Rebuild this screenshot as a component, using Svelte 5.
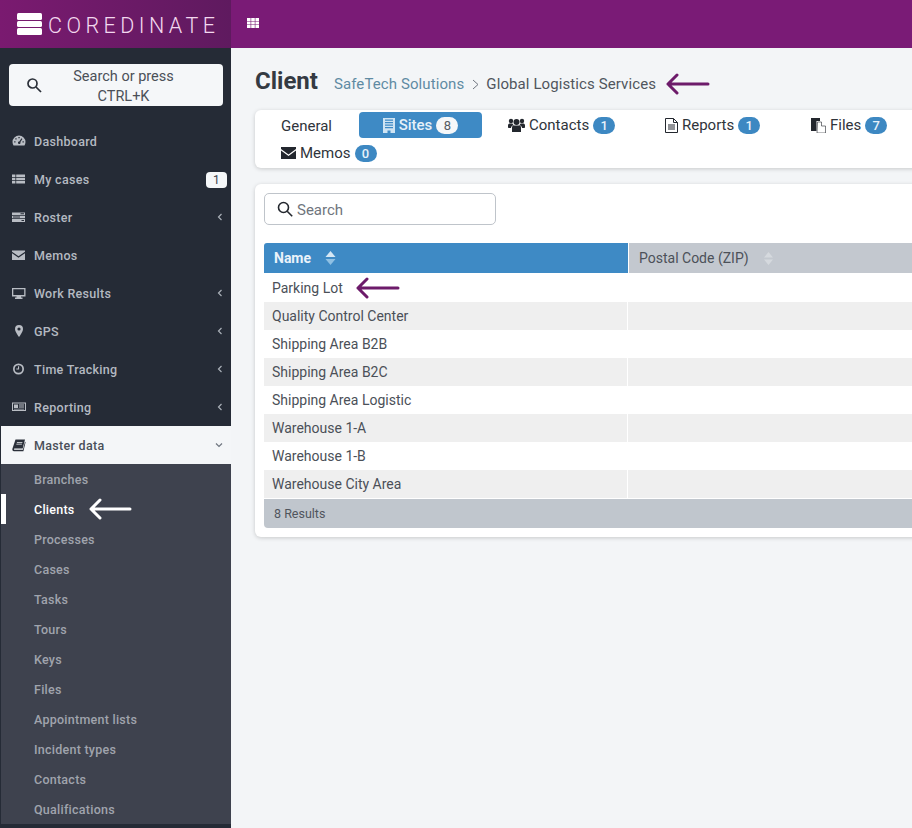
<script>
  const menu = [
    { label: 'Dashboard', icon: 'dash' },
    { label: 'My cases', icon: 'table', badge: '1' },
    { label: 'Roster', icon: 'roster', arrow: true },
    { label: 'Memos', icon: 'mail' },
    { label: 'Work Results', icon: 'monitor', arrow: true },
    { label: 'GPS', icon: 'pin', arrow: true },
    { label: 'Time Tracking', icon: 'clock', arrow: true },
    { label: 'Reporting', icon: 'news', arrow: true }
  ];
  const subItems = ['Branches', 'Clients', 'Processes', 'Cases', 'Tasks', 'Tours', 'Keys', 'Files', 'Appointment lists', 'Incident types', 'Contacts', 'Qualifications'];
  const sites = ['Parking Lot', 'Quality Control Center', 'Shipping Area B2B', 'Shipping Area B2C', 'Shipping Area Logistic', 'Warehouse 1-A', 'Warehouse 1-B', 'Warehouse City Area'];
</script>

{#snippet arrow(color, width)}
  <svg class="arrow" width={width} height="22" viewBox="0 0 {width} 22" fill="none" stroke={color} stroke-width="3" stroke-linecap="round" stroke-linejoin="round">
    <path d="M11 2 L2 11 L11 20 M2 11 H{width - 2}" />
  </svg>
{/snippet}

{#snippet menuIcon(name)}
  <svg class="micon" width="14" height="14" viewBox="0 0 14 14" fill="currentColor">
    {#if name === 'dash'}
      <path fill-rule="evenodd" d="M7 1.500a6.500 6.500 0 0 0-6.500 6.500c0 1.300.4 2.500 1 3.500h11c.6-1 1-2.200 1-3.500A6.500 6.500 0 0 0 7 1.500zM2.200 7.200h1.300v1.300H2.200zM3.300 4.300h1.300v1.300H3.300zM6.400 3h1.300v1.300H6.400zM10.500 7.200h1.300v1.300h-1.300zM9.500 4.300l.9.800-2 3a1.300 1.300 0 1 1-1.100-.7z" />
    {:else if name === 'table'}
      <path d="M0 2.500h3.400v2.500H0zM4.200 2.500h8.800v2.500H4.200zM0 5.800h3.400v2.500H0zM4.200 5.800h8.800v2.500H4.200zM0 9.100h3.400v2.500H0zM4.200 9.100h8.800v2.500H4.200z" />
    {:else if name === 'roster'}
      <path fill-rule="evenodd" d="M0 2.500h13v2.500H0zM0 5.800h13v2.500H0zM0 9.100h13v2.800H0zM8.500 3.300h3.500v.9H8.500zM1 6.600h7v.9H1zM9.500 10h2.500v1H9.500z" />
    {:else if name === 'mail'}
      <path d="M0 2.500h13v1.200L6.500 8.200 0 3.700zM0 5.200l6.500 4.500L13 5.200v6.800H0z" />
    {:else if name === 'monitor'}
      <path fill-rule="evenodd" d="M0 2h13.500v8.500H9v1.100h1.500V13h-7.500v-1.400h1.500v-1.100H0zM1.300 3.300v5.800h10.900V3.300z" />
    {:else if name === 'pin'}
      <path d="M7 1a4 4 0 0 0-4 4c0 2.800 4 8 4 8s4-5.200 4-8a4 4 0 0 0-4-4zm0 5.600A1.600 1.600 0 1 1 7 3.400a1.600 1.600 0 0 1 0 3.200z" />
    {:else if name === 'clock'}
      <path fill-rule="evenodd" d="M6.500 1.500a5.500 5.500 0 1 0 0 11 5.500 5.500 0 0 0 0-11zm0 1.700a3.800 3.800 0 1 1 0 7.600 3.800 3.800 0 0 1 0-7.600zM6 4.300h1.100v3.300H4.300V6.500H6z" />
    {:else if name === 'news'}
      <path fill-rule="evenodd" d="M0 2.500h14v8.500H0zM1 3.500v6.500h12V3.500zM2 4.500h4v3.500H2zM7 4.500h5v1H7zM7 6.500h5v1H7zM2 8.700h10v.7H2z" />
    {:else if name === 'book'}
      <path fill-rule="evenodd" d="M3.500 1.500h9.500l-2.300 9H2.500c-.7 0-.8 1.300 0 1.300h8.400l2.100-8 .6.500-2.200 9H2c-1.300 0-1.900-1.200-1.600-2.500zM5 4h5.500l-.2.800H4.800zM4.500 5.800H10l-.2.800H4.300z" />
    {/if}
  </svg>
{/snippet}

<div class="page">
  <aside class="sidebar">
    <div class="brand">
      <div class="logo"><span></span><span></span><span></span></div>
      <span class="brand-name">COREDINATE</span>
    </div>
    <div class="side-search">
      <svg width="16" height="16" viewBox="0 0 16 16" fill="none" stroke="#2a2f38" stroke-width="1.7"><circle cx="6.500" cy="6.500" r="4.500" /><path d="M10 10l5 5" /></svg>
      <span>Search or press CTRL+K</span>
    </div>
    <nav class="menu">
      {#each menu as item}
        <div class="menu-item">
          {@render menuIcon(item.icon)}
          <span class="menu-label">{item.label}</span>
          {#if item.badge}<span class="menu-badge">{item.badge}</span>{/if}
          {#if item.arrow}
            <svg class="chev" width="6" height="8" viewBox="0 0 6 8" fill="none" stroke="currentColor" stroke-width="1.200"><path d="M4.500 1L1.500 4l3 3" /></svg>
          {/if}
        </div>
      {/each}
      <div class="menu-item open">
        {@render menuIcon('book')}
        <span class="menu-label">Master data</span>
        <svg class="chev" width="8" height="6" viewBox="0 0 8 6" fill="none" stroke="currentColor" stroke-width="1.200"><path d="M1 1.500l3 3 3-3" /></svg>
      </div>
      <div class="submenu">
        {#each subItems as sub}
          <div class="sub-item" class:active={sub === 'Clients'}>
            {sub}
            {#if sub === 'Clients'}
              <span class="sub-arrow">{@render arrow('#fff', 43)}</span>
            {/if}
          </div>
        {/each}
      </div>
    </nav>
  </aside>

  <div class="main">
    <header class="topbar">
      <svg width="14" height="12" viewBox="0 0 14 12" fill="#fff"><path d="M1 1h3.600v3H1zM5.200 1h3.600v3H5.200zM9.400 1H13v3H9.400zM1 4.500h3.600v3H1zM5.200 4.500h3.600v3H5.200zM9.400 4.500H13v3H9.400zM1 8h3.600v3H1zM5.200 8h3.600v3H5.200zM9.400 8H13v3H9.400z" /></svg>
    </header>

    <div class="content">
      <div class="title-row">
        <h1>Client</h1>
        <span class="crumb-link">SafeTech Solutions</span>
        <svg class="crumb-sep" width="7" height="11" viewBox="0 0 7 11" fill="none" stroke="#6f7680" stroke-width="1"><path d="M1 1l5 4.500-5 4.500" /></svg>
        <span class="crumb">Global Logistics Services</span>
        <span class="title-arrow">{@render arrow('#6d1b6a', 44)}</span>
      </div>

      <div class="tabs card">
        <div class="tab general">General</div>
        <div class="tab sites">
          <svg width="12" height="15" viewBox="0 0 12 15" fill="#cfe4f3"><path fill-rule="evenodd" d="M0 0h12v15H7.500v-2.500h-3V15H0zM2 1.500v1.200h8V1.500zM2 4v1.200h8V4zM2 6.500v1.200h8V6.500zM2 9v1.200h8V9z" /></svg>
          Sites <span class="pill light">8</span>
        </div>
        <div class="tab contacts">
          <svg width="17" height="14" viewBox="0 0 17 14" fill="#23272e"><circle cx="8.500" cy="4" r="3" /><circle cx="3" cy="3" r="2.200" /><circle cx="14" cy="3" r="2.200" /><path d="M4 14V9.500C4 8 5 7.500 6 7.500h5c1 0 2 .5 2 2V14zM0 9V7.500C0 6 1 5.500 2 5.500h2.500c.5 1 .8 1.300 1.200 1.700C4 7.500 3 8.500 3 10H1C.4 10 0 9.600 0 9zM17 9V7.500C17 6 16 5.500 15 5.500h-2.500c-.5 1-.8 1.300-1.200 1.700 1.700.3 2.700 1.300 2.700 2.800h2c.6 0 1-.4 1-1z" /></svg>
          Contacts <span class="pill">1</span>
        </div>
        <div class="tab reports">
          <svg width="13" height="15" viewBox="0 0 13 15" fill="none" stroke="#23272e" stroke-width="1"><path d="M.5.500h8l4 4v10H.5zM8.500.500v4h4M3 7h7M3 9h7M3 11h7" /></svg>
          Reports <span class="pill">1</span>
        </div>
        <div class="tab files">
          <svg width="15" height="15" viewBox="0 0 15 15" fill="#23272e"><path d="M0 0h9v3H5.500v10H0z" /><path d="M6.500 4h4v4h4v7h-8.500z" stroke="#23272e" stroke-width=".6" fill="#fff" /></svg>
          Files <span class="pill">7</span>
        </div>
        <div class="tab memos">
          <svg width="15" height="12" viewBox="0 0 15 12" fill="#23272e"><path d="M0 0h15v2L7.500 7.500 0 2zM0 3.500l7.500 5.500L15 3.500V12H0z" /></svg>
          Memos <span class="pill">0</span>
        </div>
      </div>

      <div class="panel card">
        <div class="search">
          <svg width="16" height="16" viewBox="0 0 16 16" fill="none" stroke="#23272e" stroke-width="1.600"><circle cx="6.500" cy="6.500" r="5" /><path d="M10.200 10.200l5 5" /></svg>
          <span>Search</span>
        </div>

        <div class="table">
          <div class="thead">
            <div class="th name">
              Name
              <svg width="11" height="14" viewBox="0 0 11 14"><path d="M5.500 0l5 6H.5z" fill="#d5e7f4" /><path d="M5.500 14l-5-6h10z" fill="#8fc0e3" /></svg>
            </div>
            <div class="th zip">
              Postal Code (ZIP)
              <svg width="9" height="13" viewBox="0 0 9 13" fill="#d5d9de"><path d="M4.500 0l4.500 5.500H0zM4.500 13L0 7.500h9z" /></svg>
            </div>
          </div>
          {#each sites as site, i}
            <div class="row" class:odd={i % 2 === 1} class:top={i === 0}>
              <div class="td name">
                {site}
                {#if i === 0}<span class="row-arrow">{@render arrow('#6d1b6a', 44)}</span>{/if}
              </div>
              <div class="td zip"></div>
            </div>
          {/each}
          <div class="tfoot">8 Results</div>
        </div>
      </div>
    </div>
  </div>
</div>

<style>
  :global(body) {
    margin: 0;
    background: #f3f5f7;
    font-family: Roboto, "Liberation Sans", sans-serif;
    overflow: hidden;
  }

  .page {
    display: flex;
    width: 912px;
    height: 828px;
    overflow: hidden;
  }

  .sidebar {
    width: 231px;
    flex-shrink: 0;
    box-sizing: border-box;
    padding-left: 1px;
    background: #252b36;
    overflow: hidden;
  }

  .brand {
    height: 48px;
    margin-left: -1px;
    display: flex;
    align-items: center;
    padding-left: 17px;
    gap: 6px;
    background: linear-gradient(90deg, #7a1a70, #5f1a5f);
  }

  .logo {
    display: flex;
    flex-direction: column;
    gap: 1px;
    width: 25px;
  }

  .logo span {
    height: 6.500px;
    background: #fff;
    border-radius: 1.500px;
  }

  .brand-name {
    color: #f3d8ef;
    font-size: 21.500px;
    font-weight: 300;
    letter-spacing: 4.450px;
    padding-top: 2px;
  }

  .side-search {
    margin: 16px 8px 0 8px;
    height: 42px;
    box-sizing: border-box;
    background: #f5f7f9;
    border-radius: 4px;
    display: flex;
    align-items: center;
    padding: 0 14px 0 17px;
    color: #4b5058;
    font-size: 14.500px;
    line-height: 20px;
    text-align: center;
  }

  .side-search span {
    flex: 1;
    padding: 4px 18px 0 14px;
  }

  .menu {
    margin-top: 16px;
  }

  .menu-item {
    height: 38px;
    display: flex;
    align-items: center;
    padding: 0 8px 0 11px;
    color: #b4b9c1;
    font-size: 12.500px;
    font-weight: 500;
    letter-spacing: 0.300px;
    position: relative;
  }

  .micon {
    margin-right: 8px;
    flex-shrink: 0;
    color: #b9bdc4;
  }

  .menu-label {
    flex: 1;
  }

  .menu-badge {
    position: absolute;
    right: 4px;
    top: 12px;
    width: 21px;
    height: 16px;
    background: #f5f7f9;
    color: #3c424c;
    border-radius: 4px;
    font-size: 12px;
    text-align: center;
    line-height: 16px;
    font-weight: 400;
  }

  .chev {
    color: #aab0b8;
  }

  .menu-item.open {
    background: #f4f6f8;
    color: #4a4f58;
  }

  .menu-item.open .micon {
    color: #2b303a;
  }

  .menu-item.open .chev {
    color: #6f7680;
  }

  .submenu {
    background: #3e424e;
    height: 360px;
  }

  .sub-item {
    height: 30px;
    display: flex;
    align-items: center;
    padding-left: 33px;
    color: #a0a4ad;
    font-size: 12.500px;
    font-weight: 500;
    letter-spacing: 0.250px;
  }

  .sub-item.active {
    color: #fff;
    padding-left: 28px;
    border-left: 5px solid #fff;
  }

  .sub-arrow {
    margin-left: 14px;
    display: flex;
  }

  .arrow {
    display: block;
  }

  .main {
    flex: 1;
    min-width: 0;
  }

  .topbar {
    height: 48px;
    background: #7a1b76;
    display: flex;
    align-items: center;
    padding-left: 15px;
    padding-bottom: 3px;
    box-sizing: border-box;
  }

  .content {
    padding-left: 24px;
    width: 760px;
  }

  .title-row {
    display: flex;
    align-items: center;
    height: 62px;
    box-sizing: border-box;
    padding-top: 10px;
    color: #50555d;
    font-size: 15px;
    letter-spacing: 0.100px;
  }

  h1 {
    margin: 0 16px 0 0;
    font-size: 24px;
    font-weight: 700;
    color: #343a42;
    letter-spacing: 0;
    position: relative;
    top: -3px;
  }

  .crumb-link {
    color: #5f8ba3;
  }

  .crumb-sep {
    margin: 0 7px 0 8px;
  }

  .title-arrow {
    margin-left: 10px;
    display: flex;
  }

  .card {
    background: #fff;
    border-radius: 6px;
    box-shadow: 0 1px 4px rgba(0, 0, 0, 0.18);
  }

  .tabs {
    height: 58px;
    position: relative;
    box-sizing: border-box;
    border-radius: 6px 0 0 6px;
    display: grid;
    grid-template-columns: 104px 123px 156px 146px 1fr;
    grid-template-rows: 28px 28px;
    padding: 1px 0 0 0;
    color: #2f343b;
    font-size: 15px;
  }

  .tab {
    display: flex;
    align-items: center;
    gap: 4px;
    white-space: nowrap;
  }

  .general {
    padding-left: 26px;
    padding-top: 1px;
  }

  .sites {
    background: #3e8ac5;
    color: #e5f0f8;
    border-radius: 4px;
    height: 26px;
    margin-top: 1px;
    justify-content: center;
    font-weight: 500;
  }

  .contacts {
    padding-left: 26px;
  }

  .reports {
    padding-left: 27px;
  }

  .files {
    padding-left: 27px;
  }

  .memos {
    grid-column: 1 / 3;
    padding-left: 26px;
  }

  .pill {
    display: inline-block;
    min-width: 22px;
    height: 17px;
    line-height: 17px;
    border-radius: 9px;
    background: #3d88c2;
    color: #e8f2fa;
    font-size: 13px;
    text-align: center;
    font-weight: 500;
  }

  .pill.light {
    background: #f5f7f9;
    color: #555b63;
    font-weight: 400;
  }

  .panel {
    margin-top: 16px;
    height: 353px;
    box-sizing: border-box;
    padding: 9px 0 0 9px;
    border-radius: 6px 0 0 6px;
  }

  .search {
    width: 232px;
    height: 32px;
    box-sizing: border-box;
    border: 1px solid #bfc4ca;
    border-radius: 5px;
    display: flex;
    align-items: center;
    padding-left: 12px;
    gap: 4px;
    color: #6f757d;
    font-size: 15px;
  }

  .search span {
    padding-top: 2px;
  }

  .table {
    margin-top: 18px;
    font-size: 14px;
    color: #4b5058;
  }

  .thead {
    display: flex;
    height: 30px;
  }

  .th {
    display: flex;
    align-items: center;
    font-size: 14px;
    box-sizing: border-box;
  }

  .th.name {
    width: 364px;
    background: #3e8ac5;
    color: #eaf3fa;
    font-weight: 700;
    padding-left: 10px;
    gap: 14px;
    border-radius: 3px 0 0 0;
  }

  .th.zip {
    flex: 1;
    margin-left: 1px;
    background: #c3c8cf;
    color: #4c5159;
    padding-left: 10px;
    gap: 15px;
  }

  .row {
    display: flex;
    height: 28px;
    background: #fff;
  }

  .row.top {
    height: 29px;
    padding-top: 1px;
    box-sizing: border-box;
  }

  .row.odd {
    background: #efefef;
  }

  .td {
    display: flex;
    align-items: center;
  }

  .td.name {
    width: 364px;
    padding-left: 8px;
    box-sizing: border-box;
  }

  .row.odd .td.name {
    border-right: 1px solid #fff;
  }

  .row-arrow {
    margin-left: 13px;
    display: flex;
  }

  .tfoot {
    height: 29px;
    margin-top: 1px;
    background: #c0c6cd;
    display: flex;
    align-items: center;
    padding-left: 10px;
    font-size: 12.500px;
    color: #50555d;
    border-radius: 0 0 0 4px;
  }
</style>
